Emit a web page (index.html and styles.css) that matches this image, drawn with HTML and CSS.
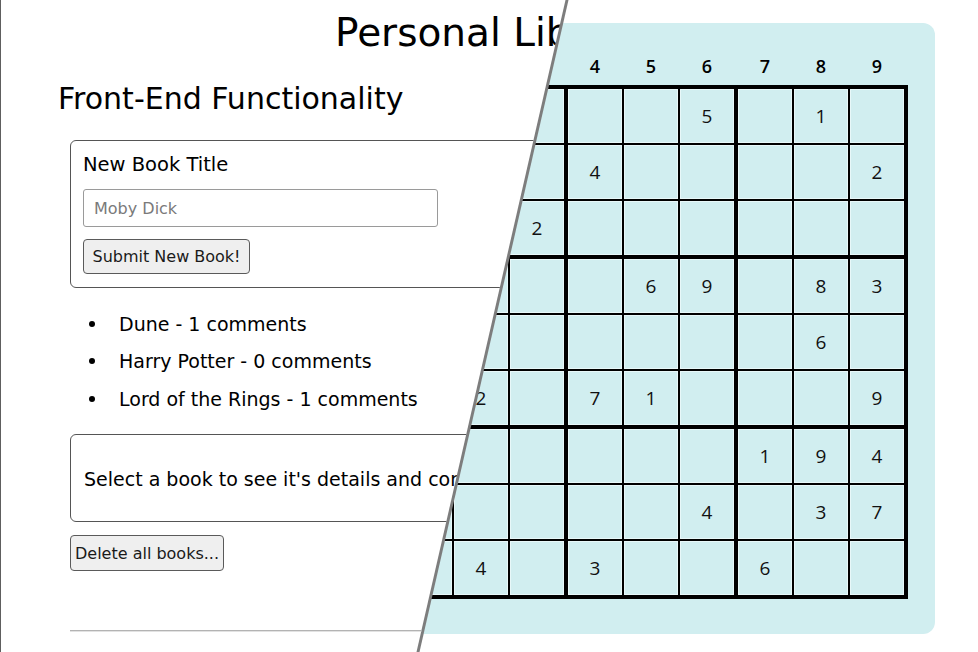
FILE: index.html
```html
<!DOCTYPE html>
<html lang="en">
<head>
<meta charset="utf-8">
<title>Personal Library / Sudoku</title>
<link rel="stylesheet" href="styles.css">
</head>
<body>
<div class="stage">
  <section class="layer sudoku-page">
    <div class="card">
      <div class="col-head">
        <div class="head-group"><span>1</span><span>2</span><span>3</span></div>
        <div class="head-group"><span>4</span><span>5</span><span>6</span></div>
        <div class="head-group"><span>7</span><span>8</span><span>9</span></div>
      </div>
      <div class="board">
        <div class="box">
          <div class="cell"></div><div class="cell"></div><div class="cell"></div>
          <div class="cell"></div><div class="cell"></div><div class="cell"></div>
          <div class="cell"></div><div class="cell"></div><div class="cell">2</div>
        </div>
        <div class="box">
          <div class="cell"></div><div class="cell"></div><div class="cell">5</div>
          <div class="cell">4</div><div class="cell"></div><div class="cell"></div>
          <div class="cell"></div><div class="cell"></div><div class="cell"></div>
        </div>
        <div class="box">
          <div class="cell"></div><div class="cell">1</div><div class="cell"></div>
          <div class="cell"></div><div class="cell"></div><div class="cell">2</div>
          <div class="cell"></div><div class="cell"></div><div class="cell"></div>
        </div>
        <div class="box">
          <div class="cell"></div><div class="cell"></div><div class="cell"></div>
          <div class="cell"></div><div class="cell"></div><div class="cell"></div>
          <div class="cell"></div><div class="cell">2</div><div class="cell"></div>
        </div>
        <div class="box">
          <div class="cell"></div><div class="cell">6</div><div class="cell">9</div>
          <div class="cell"></div><div class="cell"></div><div class="cell"></div>
          <div class="cell">7</div><div class="cell">1</div><div class="cell"></div>
        </div>
        <div class="box">
          <div class="cell"></div><div class="cell">8</div><div class="cell">3</div>
          <div class="cell"></div><div class="cell">6</div><div class="cell"></div>
          <div class="cell"></div><div class="cell"></div><div class="cell">9</div>
        </div>
        <div class="box">
          <div class="cell"></div><div class="cell"></div><div class="cell"></div>
          <div class="cell"></div><div class="cell"></div><div class="cell"></div>
          <div class="cell"></div><div class="cell">4</div><div class="cell"></div>
        </div>
        <div class="box">
          <div class="cell"></div><div class="cell"></div><div class="cell"></div>
          <div class="cell"></div><div class="cell"></div><div class="cell">4</div>
          <div class="cell">3</div><div class="cell"></div><div class="cell"></div>
        </div>
        <div class="box">
          <div class="cell">1</div><div class="cell">9</div><div class="cell">4</div>
          <div class="cell"></div><div class="cell">3</div><div class="cell">7</div>
          <div class="cell">6</div><div class="cell"></div><div class="cell"></div>
        </div>
      </div>
    </div>
  </section>

  <div class="layer divider"></div>

  <section class="layer library">
    <h1 class="lib-title">Personal Library</h1>
    <div class="lib-body">
      <h2 class="lib-subtitle">Front-End Functionality</h2>
      <form class="book-form">
        <label class="field-label" for="title">New Book Title</label>
        <input class="text-input" id="title" type="text" placeholder="Moby Dick">
        <button class="btn btn-submit" type="button">Submit New Book!</button>
      </form>
      <ul class="book-list">
        <li class="book-item">Dune - 1 comments</li>
        <li class="book-item">Harry Potter - 0 comments</li>
        <li class="book-item">Lord of the Rings - 1 comments</li>
      </ul>
      <div class="detail-box">
        <p class="detail-text">Select a book to see it's details and comments</p>
      </div>
      <button class="btn btn-delete" type="button">Delete all books...</button>
      <hr class="rule">
    </div>
  </section>
</div>
</body>
</html>
```

FILE: styles.css
```css
* {
  box-sizing: border-box;
}

html,
body {
  margin: 0;
  padding: 0;
}

body {
  width: 978px;
  height: 652px;
  overflow: hidden;
  background: #ffffff;
}

.stage {
  display: grid;
  width: 978px;
  height: 652px;
  overflow: hidden;
}

.layer {
  grid-area: 1 / 1;
  width: 978px;
  height: 652px;
}

/* ---------- Sudoku page (right side) ---------- */
.sudoku-page {
  background: #ffffff;
  padding: 23px 0 0 367px;
  font-family: "Open Sans", "DejaVu Sans", sans-serif;
  color: #111111;
}

.card {
  width: 568px;
  height: 611px;
  background: #d1eef0;
  border-radius: 12px;
  padding: 0 27px 35px;
}

.col-head {
  height: 62px;
  display: grid;
  grid-template-columns: repeat(3, 166px);
  column-gap: 4px;
  padding: 0 4px;
  align-items: end;
}

.head-group {
  display: grid;
  grid-template-columns: repeat(3, 54px);
  column-gap: 2px;
}

.head-group span {
  text-align: center;
  font-weight: 600;
  font-size: 18px;
  line-height: 24px;
  padding-bottom: 7px;
  color: #000000;
}

.board {
  width: 514px;
  background: #000000;
  padding: 4px;
  display: grid;
  grid-template-columns: repeat(3, 166px);
  grid-auto-rows: 166px;
  gap: 4px;
}

.box {
  display: grid;
  grid-template-columns: repeat(3, 54px);
  grid-auto-rows: 54px;
  gap: 2px;
}

.cell {
  background: #d1eef0;
  box-shadow: inset 0 0 0 1px #e8f8f9;
  display: flex;
  align-items: center;
  justify-content: center;
  font-size: 19px;
  color: #111111;
}

/* ---------- Divider ---------- */
.divider {
  background: #7d7d7d;
  clip-path: polygon(0 0, 568.5px 0, 419.5px 652px, 0 652px);
}

/* ---------- Library page (left side) ---------- */
.library {
  background: #ffffff;
  border-left: 1px solid #5e5e5e;
  font-family: "DejaVu Sans", "Liberation Sans", sans-serif;
  color: #000000;
  clip-path: polygon(0 0, 565.5px 0, 416.5px 652px, 0 652px);
}

.lib-title {
  margin: 0;
  padding: 11px 0 0 334px;
  font-size: 39px;
  font-weight: 400;
  line-height: 44px;
  white-space: nowrap;
}

.lib-body {
  padding-left: 69px;
}

.lib-subtitle {
  margin: 26px 0 0 -12px;
  font-size: 30px;
  font-weight: 400;
  line-height: 36px;
  white-space: nowrap;
}

.book-form {
  margin: 23px 0 0;
  width: 640px;
  height: 148px;
  border: 1px solid #555555;
  border-radius: 6px;
  padding: 13px 12px;
}

.field-label {
  display: block;
  font-size: 19.5px;
  line-height: 22px;
}

.text-input {
  display: block;
  margin-top: 13px;
  width: 355px;
  height: 38px;
  border: 1px solid #9a9a9a;
  border-radius: 3px;
  padding: 0 10px;
  font-family: "DejaVu Sans", sans-serif;
  font-size: 16px;
  color: #000;
  background: #fff;
}

.text-input::placeholder {
  color: #7a7a7a;
}

.btn {
  display: block;
  font-family: "DejaVu Sans", sans-serif;
  font-size: 16px;
  color: #1a1a1a;
  background: #efefef;
  border: 1px solid #5a5a5a;
  border-radius: 4px;
  padding: 0;
  text-align: center;
}

.btn-submit {
  margin-top: 12px;
  width: 167px;
  height: 35px;
}

.book-list {
  list-style: none;
  margin: 17px 0 0;
  padding: 0 0 0 19px;
}

.book-item {
  display: flex;
  align-items: center;
  gap: 24px;
  height: 37.5px;
  font-size: 19px;
  white-space: nowrap;
}

.book-item::before {
  content: "";
  width: 6px;
  height: 6px;
  border-radius: 50%;
  background: #000000;
  flex: none;
}

.detail-box {
  margin-top: 16.5px;
  width: 640px;
  height: 88px;
  border: 1px solid #555555;
  border-radius: 6px;
  padding: 0 13px;
  display: flex;
  align-items: center;
}

.detail-text {
  margin: 2px 0 0;
  font-size: 19px;
  line-height: 22px;
  white-space: nowrap;
}

.btn-delete {
  margin-top: 13px;
  width: 154px;
  height: 36px;
}

.rule {
  margin: 59px 0 0;
  width: 640px;
  height: 0;
  border: 0;
  border-top: 1px solid #b3b3b3;
  border-bottom: 1px solid #e2e2e2;
}
```
